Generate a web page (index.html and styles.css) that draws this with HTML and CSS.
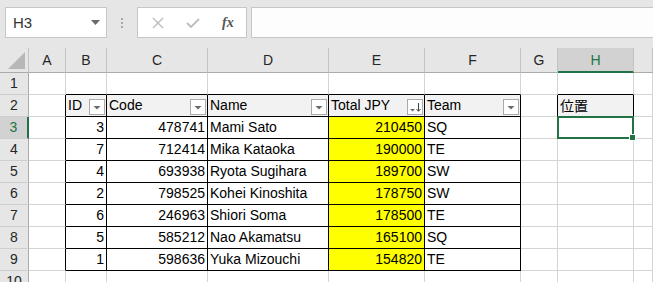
FILE: index.html
```html
<!DOCTYPE html>
<html lang="ja">
<head>
    <meta charset="UTF-8">
    <title>Sheet1</title>
    <link rel="stylesheet" href="styles.css">
</head>
<body>
    <div class="toolbar">
        <div class="namebox">
            <span>H3</span>
            <svg width="9" height="5" viewBox="0 0 9 5"><path d="M0 0h9L4.5 5z" fill="#6a6a6a"/></svg>
        </div>
        <div class="grip"><i></i><i></i><i></i></div>
        <div class="fbtns">
            <svg width="12" height="12" viewBox="0 0 12 12"><path d="M1 1L11 11M11 1L1 11" stroke="#bcbcbc" stroke-width="1.4" fill="none"/></svg>
            <svg width="14" height="12" viewBox="0 0 14 12"><path d="M1 6l4 4 8-8" stroke="#bcbcbc" stroke-width="1.8" fill="none"/></svg>
            <span class="fx">fx</span>
        </div>
        <div class="fbar"></div>
    </div>

    <div class="sheet">
        <div class="row colhead">
            <div class="corner"><svg width="28" height="24" viewBox="0 0 28 24"><path d="M8 21H25V4z" fill="#b7b7b7"/></svg></div>
            <div>A</div><div>B</div><div>C</div><div>D</div><div>E</div><div>F</div><div>G</div><div class="sel">H</div><div></div>
        </div>

        <div class="row">
            <div class="rh">1</div>
            <div></div><div class="tt"></div><div class="tt"></div><div class="tt"></div><div class="tt"></div><div class="tt"></div><div></div><div class="tt"></div><div></div>
        </div>

        <div class="row">
            <div class="rh">2</div>
            <div class="tl"></div>
            <div class="t th"><span>ID</span><svg class="flt" width="16" height="16" viewBox="0 0 16 16"><rect x="0.5" y="0.5" width="15" height="15" fill="#fff" stroke="#ababab"/><path d="M4.5 7h7L8 10.5z" fill="#6a6a6a"/></svg></div>
            <div class="t th"><span>Code</span><svg class="flt" width="16" height="16" viewBox="0 0 16 16"><rect x="0.5" y="0.5" width="15" height="15" fill="#fff" stroke="#ababab"/><path d="M4.5 7h7L8 10.5z" fill="#6a6a6a"/></svg></div>
            <div class="t th"><span>Name</span><svg class="flt" width="16" height="16" viewBox="0 0 16 16"><rect x="0.5" y="0.5" width="15" height="15" fill="#fff" stroke="#ababab"/><path d="M4.5 7h7L8 10.5z" fill="#6a6a6a"/></svg></div>
            <div class="t th"><span>Total JPY</span><svg class="flt" width="16" height="16" viewBox="0 0 16 16"><rect x="0.5" y="0.5" width="15" height="15" fill="#fff" stroke="#ababab"/><path d="M3 10h5l-2.5 2.5z" fill="#6a6a6a"/><path d="M11.5 4v8M9.5 10l2 2.3 2-2.3" stroke="#444" fill="none"/></svg></div>
            <div class="t th"><span>Team</span><svg class="flt" width="16" height="16" viewBox="0 0 16 16"><rect x="0.5" y="0.5" width="15" height="15" fill="#fff" stroke="#ababab"/><path d="M4.5 7h7L8 10.5z" fill="#6a6a6a"/></svg></div>
            <div class="tl"></div>
            <div class="t th jp">位置</div>
            <div></div>
        </div>

        <div class="row">
            <div class="rh sel">3</div>
            <div class="tl"></div>
            <div class="t num">3</div><div class="t num">478741</div><div class="t">Mami Sato</div><div class="t num hl">210450</div><div class="t">SQ</div>
            <div></div><div class="active"><span class="cursor"></span></div><div></div>
        </div>
        <div class="row">
            <div class="rh">4</div>
            <div class="tl"></div>
            <div class="t num">7</div><div class="t num">712414</div><div class="t">Mika Kataoka</div><div class="t num hl">190000</div><div class="t">TE</div>
            <div></div><div></div><div></div>
        </div>
        <div class="row">
            <div class="rh">5</div>
            <div class="tl"></div>
            <div class="t num">4</div><div class="t num">693938</div><div class="t">Ryota Sugihara</div><div class="t num hl">189700</div><div class="t">SW</div>
            <div></div><div></div><div></div>
        </div>
        <div class="row">
            <div class="rh">6</div>
            <div class="tl"></div>
            <div class="t num">2</div><div class="t num">798525</div><div class="t">Kohei Kinoshita</div><div class="t num hl">178750</div><div class="t">SW</div>
            <div></div><div></div><div></div>
        </div>
        <div class="row">
            <div class="rh">7</div>
            <div class="tl"></div>
            <div class="t num">6</div><div class="t num">246963</div><div class="t">Shiori Soma</div><div class="t num hl">178500</div><div class="t">TE</div>
            <div></div><div></div><div></div>
        </div>
        <div class="row">
            <div class="rh">8</div>
            <div class="tl"></div>
            <div class="t num">5</div><div class="t num">585212</div><div class="t">Nao Akamatsu</div><div class="t num hl">165100</div><div class="t">SQ</div>
            <div></div><div></div><div></div>
        </div>
        <div class="row">
            <div class="rh">9</div>
            <div class="tl"></div>
            <div class="t num">1</div><div class="t num">598636</div><div class="t">Yuka Mizouchi</div><div class="t num hl">154820</div><div class="t">TE</div>
            <div></div><div></div><div></div>
        </div>
        <div class="row">
            <div class="rh">10</div>
            <div></div><div></div><div></div><div></div><div></div><div></div><div></div><div></div><div></div>
        </div>
    </div>
</body>
</html>
```

FILE: styles.css
```css
body {
    margin: 0;
    background: #fff;
    font-family: "Liberation Sans", "Noto Sans CJK JP", sans-serif;
    font-size: 14px;
    color: #000;
    overflow: hidden;
}

.toolbar {
    height: 48px;
    box-sizing: border-box;
    padding: 7px 0 0 5px;
    display: flex;
    align-items: flex-start;
    background: #e6e6e6;
}
.namebox {
    width: 102px;
    height: 31px;
    box-sizing: border-box;
    border: 1px solid #c6c6c6;
    background: #fff;
    display: flex;
    align-items: center;
    justify-content: space-between;
    padding: 0 6px 0 7px;
    font-size: 15px;
    color: #333;
}
.grip {
    width: 30px;
    height: 31px;
    display: flex;
    flex-direction: column;
    align-items: center;
    justify-content: center;
    gap: 2px;
}
.grip i {
    width: 2px;
    height: 2px;
    background: #a8a8a8;
}
.fbtns {
    width: 110px;
    height: 31px;
    box-sizing: border-box;
    border: 1px solid #c6c6c6;
    background: #fff;
    display: flex;
    align-items: center;
    gap: 22px;
    padding-left: 14px;
}
.fx {
    font-family: "Liberation Serif", serif;
    font-style: italic;
    font-weight: bold;
    font-size: 14px;
    color: #555;
    margin-left: 0;
}
.fbar {
    flex: 1;
    height: 31px;
    margin-left: 4px;
    box-sizing: border-box;
    border: 1px solid #c6c6c6;
    border-right: none;
    background: #fdfdfd;
}

.row {
    display: grid;
    grid-template-columns: 29px 37px 41px 101px 121px 96px 96px 37px 76px 1fr;
    height: 22px;
}
.row > div {
    box-sizing: border-box;
    border-right: 1px solid #d4d4d4;
    border-bottom: 1px solid #d4d4d4;
    line-height: 21px;
    padding: 0 2px;
    white-space: nowrap;
    overflow: hidden;
}

.colhead {
    height: 25px;
    background: #e6e6e6;
}
.colhead > div {
    border-right-color: #c3c3c3;
    border-bottom-color: #ababab;
    text-align: center;
    line-height: 24px;
    color: #262626;
}
.colhead .corner {
    padding: 0;
    line-height: 0;
}
.colhead .sel {
    background: #d2d2d2;
    color: #217346;
    border-bottom: 2px solid #217346;
}

.rh {
    background: #e6e6e6;
    text-align: center;
    color: #262626;
}
.row > .rh {
    border-right-color: #ababab;
    border-bottom-color: #cfcfcf;
    padding: 0;
}
.row > .rh.sel {
    background: #d2d2d2;
    color: #217346;
    border-right: 2px solid #217346;
}

/* table borders */
.row > .t {
    border-right-color: #000;
    border-bottom-color: #000;
}
.row > .tt {
    border-bottom-color: #000;
}
.row > .tl {
    border-right-color: #000;
}
.th {
    background: #f2f2f2;
    display: flex;
    align-items: center;
    justify-content: space-between;
}
.row > .th {
    padding: 0 1px 0 2px;
}
.flt {
    flex: none;
    margin-top: 2px;
}
.jp {
    font-family: "Noto Sans CJK JP", sans-serif;
}
.num {
    text-align: right;
}
.hl {
    background: #ffff00;
}

.row > .active {
    position: relative;
    overflow: visible;
}
.cursor {
    position: absolute;
    left: -1px;
    top: -1px;
    right: -1px;
    bottom: -1px;
    border: 2px solid #217346;
    z-index: 2;
}
.cursor::after {
    content: "";
    position: absolute;
    right: -4px;
    bottom: -4px;
    width: 5px;
    height: 5px;
    background: #217346;
    border: 1px solid #fff;
}
```
